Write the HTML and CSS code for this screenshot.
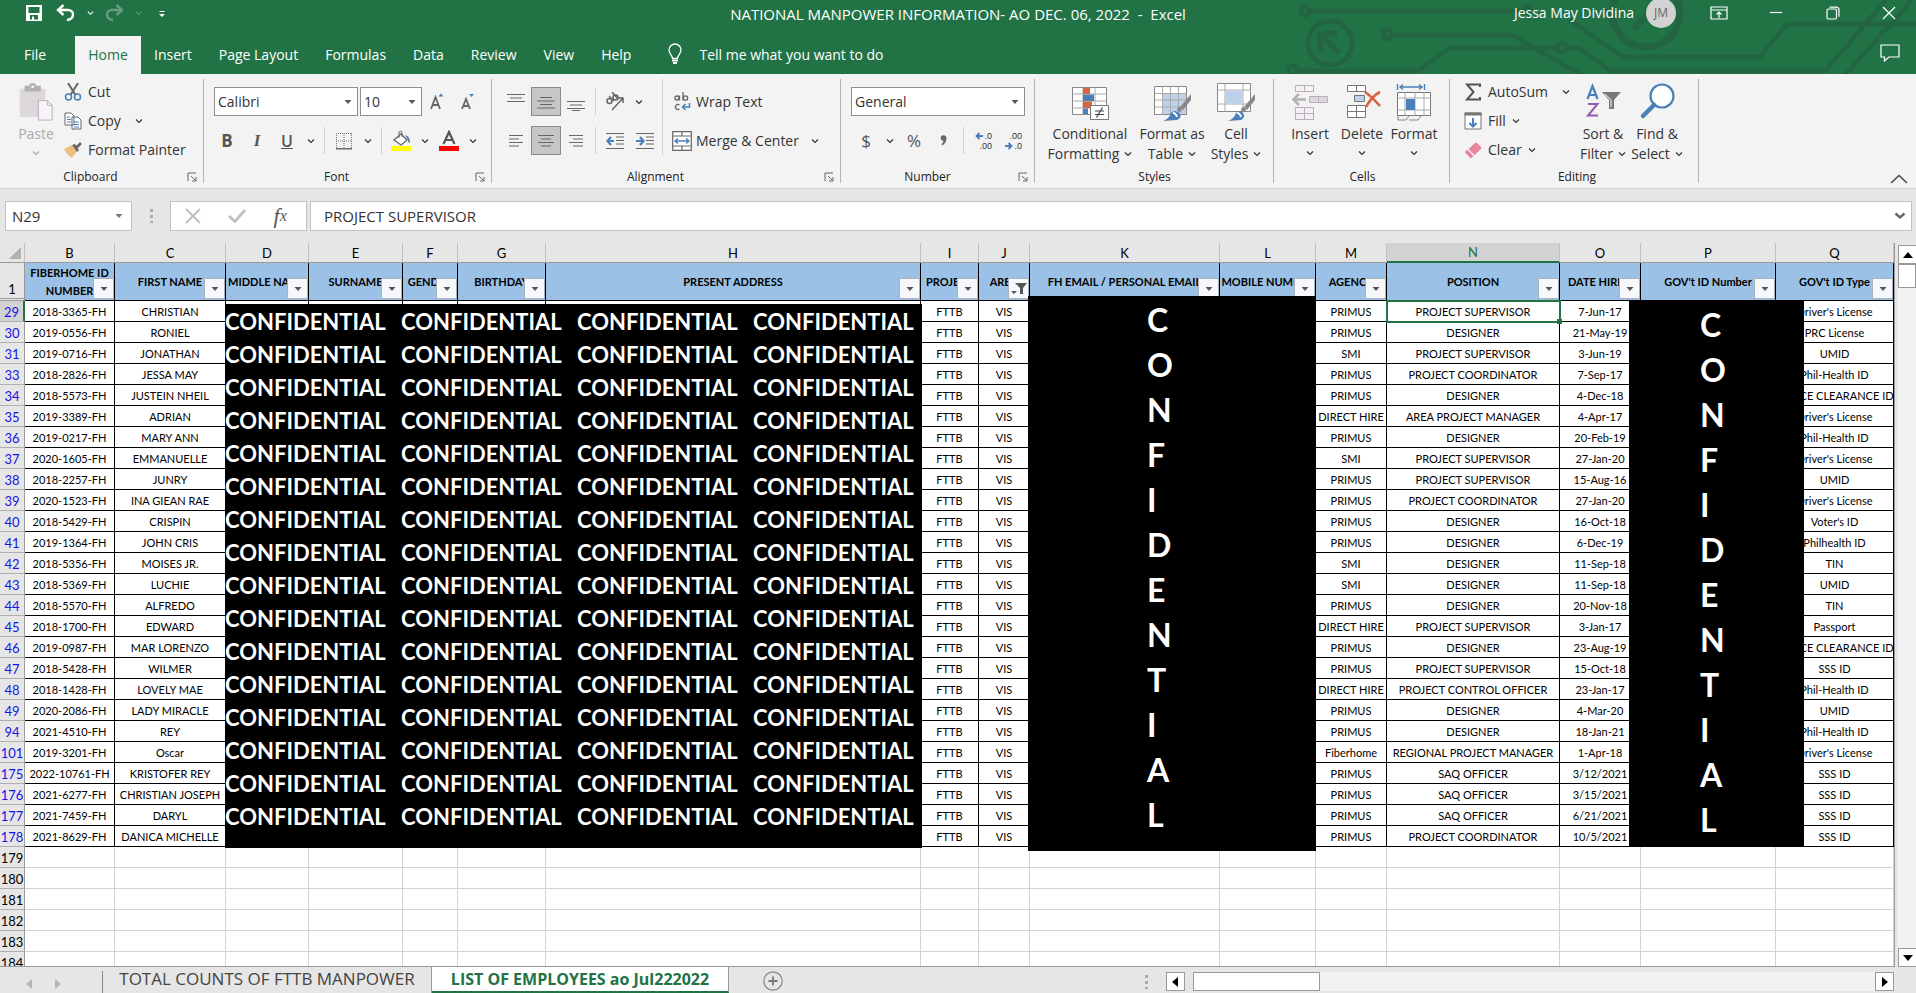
FILE: index.html
```html
<!DOCTYPE html>
<html lang="en">
<head>
<meta charset="utf-8">
<title>NATIONAL MANPOWER INFORMATION- AO DEC. 06, 2022 - Excel</title>
<link rel="stylesheet" href="styles.css">
</head>
<body>
<svg class="defs" aria-hidden="true">
  <symbol id="chev" viewBox="0 0 8 6"><path d="M1 1.5 4 4.5 7 1.5" fill="none" stroke="currentColor" stroke-width="1.2"/></symbol>
  <symbol id="tri" viewBox="0 0 8 6"><path d="M0.5 1h7L4 5z" fill="currentColor"/></symbol>
  <symbol id="launch" viewBox="0 0 10 10"><path d="M1 9V1h8M4 4l4.500 4.500M9 5v4H5" fill="none" stroke="#666" stroke-width="1"/></symbol>
</svg>
<div class="app">
  <header class="top">
    <svg class="art" width="646" height="74" viewBox="0 0 646 74" aria-hidden="true">
      <g fill="none" stroke="#236541" stroke-width="4.500">
        <circle cx="35" cy="11" r="4.500"/><path d="M40 11H253"/><circle cx="257" cy="9" r="3.500"/>
        <circle cx="60" cy="43" r="22" stroke-width="5"/><path d="M69 53 51 35M50 51V34h17" stroke-width="6"/>
        <circle cx="117" cy="34.500" r="4.500"/><path d="M122 35H240Q247 36 252 41L312 75"/>
        <circle cx="23" cy="70" r="4.500"/><path d="M28 71H148L180 48H287"/><circle cx="292" cy="47.500" r="4.500"/>
        <path d="M297 48H306Q312 49 316 53L340 71H555L616 0"/>
        <path d="M300 20 353 57H490L517 24H646"/>
        <path d="M575 75 642 0"/>
        <circle cx="376" cy="13" r="34" stroke-width="7"/><path d="M363 29 385 7" stroke-width="7"/>
      </g>
    </svg>
    <div class="titlebar">
      <div class="quick">
        <button class="qb" aria-label="Save"><svg width="18" height="18" viewBox="0 0 18 18"><path fill="#fff" fill-rule="evenodd" d="M1 1h16v16H1zM3.500 3v6h11V3zM5 11v4.500h2V12.500h2v3h4V11z"/></svg></button>
        <button class="qb" aria-label="Undo"><svg width="20" height="18" viewBox="0 0 20 18"><path d="M7.500 1 2 6l5.500 5M2.500 6H12c3 0 5 2 5 4.500S15 15.500 11 16" fill="none" stroke="#fff" stroke-width="2.400"/></svg></button>
        <button class="qc" aria-label="Undo list"><svg width="7" height="6"><use href="#chev"/></svg></button>
        <button class="qb dim" aria-label="Redo"><svg width="20" height="18" viewBox="0 0 20 18"><path d="M12.500 1 18 6l-5.500 5M17.500 6H8c-3 0-5 2-5 4.500S5 15.500 9 16" fill="none" stroke="#fff" stroke-width="2.400"/></svg></button>
        <button class="qc dim" aria-label="Redo list"><svg width="7" height="6"><use href="#chev"/></svg></button>
        <button class="qb" aria-label="Customize toolbar"><svg width="8" height="10" viewBox="0 0 8 10"><path d="M1.500 3.500h5" stroke="#fff"/><path d="M1 6h6L4 9z" fill="#fff"/></svg></button>
      </div>
      <div class="doc">NATIONAL MANPOWER INFORMATION- AO DEC. 06, 2022&nbsp; -&nbsp; Excel</div>
      <div class="account">
        <span class="user">Jessa May Dividina</span><span class="avatar">JM</span>
        <button class="wb" aria-label="Ribbon display"><svg width="18" height="14" viewBox="0 0 18 14"><path d="M1 1h16v12H1zM1 4h16M9 12V6.500M6.500 8.500 9 6l2.500 2.500" fill="none" stroke="#fff" stroke-width="1.200"/></svg></button>
        <button class="wb" aria-label="Minimize"><svg width="14" height="14" viewBox="0 0 14 14"><path d="M1 6.500h12" stroke="#fff" stroke-width="1.200"/></svg></button>
        <button class="wb" aria-label="Restore"><svg width="14" height="14" viewBox="0 0 14 14"><rect x="1" y="3" width="9.500" height="10" rx="1.500" fill="none" stroke="#fff" stroke-width="1.200"/><path d="M3.500 1.200H10q3 0 3 3v6.500" fill="none" stroke="#fff" stroke-width="1.200"/></svg></button>
        <button class="wb" aria-label="Close"><svg width="14" height="14" viewBox="0 0 14 14"><path d="m1 1 12 12M13 1 1 13" stroke="#fff" stroke-width="1.300"/></svg></button>
      </div>
    </div>
    <nav class="tabs">
      <button class="tab file">File</button><button class="tab on">Home</button><button class="tab">Insert</button><button class="tab">Page Layout</button><button class="tab">Formulas</button><button class="tab">Data</button><button class="tab">Review</button><button class="tab">View</button><button class="tab">Help</button>
      <button class="tab tell"><svg width="16" height="22" viewBox="0 0 16 22"><path d="M5.500 15.500C5.500 12 2 11 2 7a6 6 0 0 1 12 0c0 4-3.500 5-3.500 8.500z" fill="none" stroke="#fff" stroke-width="1.300"/><path d="M5 17.500h6M6 20h4" stroke="#fff" stroke-width="1.800"/></svg>Tell me what you want to do</button>
      <button class="comment" aria-label="Comments"><svg width="20" height="18" viewBox="0 0 20 18"><path d="M1 1h18v12H9l-4.500 4V13H1z" fill="none" stroke="#fff" stroke-width="1.200"/></svg></button>
    </nav>
  </header>

  <section class="ribbon">
    <div class="group g-clip">
      <div class="body">
        <button class="big w-paste off"><svg width="36" height="40" viewBox="0 0 36 40"><path d="M1 6h27v30H1z" fill="#dcd8dc"/><path d="M6 3h5q0-3 3.500-3T18 3h5v6H6z" fill="#b2b0b2"/><circle cx="14.500" cy="4" r="1.500" fill="#f3f3f3"/><path d="M20.500 18.500H30l5 5V39H20.500z" fill="#f8f3f8" stroke="#b2b0b2"/><path d="M30 18.500v5h5" fill="none" stroke="#b2b0b2"/></svg><span>Paste</span><svg width="8" height="6"><use href="#chev"/></svg></button>
        <div class="stack">
          <button class="line"><svg width="18" height="18" viewBox="0 0 18 18"><path d="m4 0 7.500 12M14 0 6.500 12" stroke="#666" stroke-width="2"/><circle cx="4.500" cy="14" r="3" fill="none" stroke="#4a7fb8" stroke-width="1.500"/><circle cx="13.500" cy="14" r="3" fill="none" stroke="#4a7fb8" stroke-width="1.500"/></svg>Cut</button>
          <button class="line"><svg width="18" height="18" viewBox="0 0 18 18"><path d="M1 1h6l3 3v9H1zM8 5h6l3 3v9H8z" fill="#fff" stroke="#666"/><path d="M3 5h3M3 7.500h4M3 10h4M10 10h5M10 12.500h5M10 15h5" stroke="#4a7fb8"/></svg>Copy<svg class="after" width="8" height="6"><use href="#chev"/></svg></button>
          <button class="line"><svg width="18" height="18" viewBox="0 0 18 18"><path d="M0 8 8 4l5 6-5 7Q3 14 0 8z" fill="#ecc07c"/><path d="m8 4 3-1 4 6-2 2zM12 5l4-4 2 2-4 4z" fill="#666"/></svg>Format Painter</button>
        </div>
      </div>
      <div class="foot"><span>Clipboard</span><button aria-label="Clipboard settings"><svg width="10" height="10"><use href="#launch"/></svg></button></div>
    </div>

    <div class="group g-font">
      <div class="rows">
        <div class="row inset">
          <label class="combo c144"><select aria-label="Font name"><option>Calibri</option></select><svg width="8" height="6"><use href="#tri"/></svg></label>
          <label class="combo c62"><select aria-label="Font size"><option>10</option></select><svg width="8" height="6"><use href="#tri"/></svg></label>
          <button class="b" aria-label="Increase font size"><svg width="18" height="20" viewBox="0 0 18 20"><path d="m2 17 4.500-12L11 17M3.500 13h6" fill="none" stroke="#666" stroke-width="1.800"/><path d="M9.500 4.500h5L12 1.500z" fill="#4a7fb8"/></svg></button>
          <button class="b" aria-label="Decrease font size"><svg width="18" height="20" viewBox="0 0 18 20"><path d="m3 17 4-10 4 10M4.500 14h5" fill="none" stroke="#666" stroke-width="1.800"/><path d="M10 2h5l-2.500 3z" fill="#4a7fb8"/></svg></button>
        </div>
        <div class="row">
          <button class="b t"><b>B</b></button><button class="b t"><i>I</i></button><button class="b t"><u>U</u></button><button class="cv" aria-label="Underline styles"><svg width="8" height="6"><use href="#chev"/></svg></button><span class="sep"></span>
          <button class="b" aria-label="Borders"><svg width="18" height="18" viewBox="0 0 18 18"><path d="M1.500 1v15M9 1v15M16.500 1v15M1 1.500h16M1 9h16" stroke="#777" stroke-dasharray="1 1"/><path d="M1 16.800h16" stroke="#555" stroke-width="1.300"/></svg></button><button class="cv" aria-label="Border styles"><svg width="8" height="6"><use href="#chev"/></svg></button><span class="sep"></span>
          <button class="b" aria-label="Fill color"><svg width="22" height="22" viewBox="0 0 22 22"><path d="m4 10 7-6 6 6-6 5z" fill="#fff" stroke="#666" stroke-width="1.300"/><path d="M9 8V3q0-2 1.500-2T12 3v4" fill="none" stroke="#666"/><path d="M15 5q5 1 5 8-2 0-2-3z" fill="#4a7fb8"/><path fill="#ff0" d="M1 16h20v5H1z"/></svg></button><button class="cv" aria-label="Fill colors"><svg width="8" height="6"><use href="#chev"/></svg></button>
          <button class="b" aria-label="Font color"><svg width="22" height="22" viewBox="0 0 22 22"><path d="M5.500 14 11 2l5.500 12M7.500 10h7" fill="none" stroke="#555" stroke-width="2.200"/><path fill="#f00" d="M1 16h20v5H1z"/></svg></button><button class="cv" aria-label="Font colors"><svg width="8" height="6"><use href="#chev"/></svg></button>
        </div>
      </div>
      <div class="foot"><span>Font</span><button aria-label="Font settings"><svg width="10" height="10"><use href="#launch"/></svg></button></div>
    </div>

    <div class="group g-align">
      <div class="body">
        <div class="rows w161">
          <div class="row">
            <button class="b" aria-label="Top align"><svg width="18" height="18" viewBox="0 0 18 18"><path d="M0 1.500h18M3 5h12M0 8.500h18" stroke="#666"/></svg></button>
            <button class="b sel" aria-label="Middle align"><svg width="18" height="18" viewBox="0 0 18 18"><path d="M3 4.500h12M0 8h18M3 11.500h12M0 15h18" stroke="#666"/></svg></button>
            <button class="b" aria-label="Bottom align"><svg width="18" height="18" viewBox="0 0 18 18"><path d="M0 8.500h18M3 12h12M0 15.500h18M5 17.500h8" stroke="#666"/></svg></button><span class="sep"></span>
            <button class="b" aria-label="Orientation"><svg width="20" height="20" viewBox="0 0 20 20"><g fill="none" stroke="#666" stroke-width="1.500"><circle cx="4.500" cy="9" r="2.500"/><path d="m4 4 5 5M7 0l6 7"/><circle cx="10.500" cy="5.500" r="2.500"/><path d="M7 18 18 6M18 11V6h-5"/></g></svg></button><button class="cv" aria-label="Orientation list"><svg width="8" height="6"><use href="#chev"/></svg></button>
          </div>
          <div class="row">
            <button class="b" aria-label="Align left"><svg width="14" height="14" viewBox="0 0 14 14"><path d="M0 1.500h14M0 5h10M0 8.500h14M0 12h10" stroke="#666"/></svg></button>
            <button class="b sel" aria-label="Center"><svg width="16" height="14" viewBox="0 0 16 14"><path d="M0 1.500h16M3 5h10M0 8.500h16M3 12h10" stroke="#666"/></svg></button>
            <button class="b" aria-label="Align right"><svg width="14" height="14" viewBox="0 0 14 14"><path d="M0 1.500h14M4 5h10M0 8.500h14M4 12h10" stroke="#666"/></svg></button><span class="sep"></span>
            <button class="b" aria-label="Decrease indent"><svg width="18" height="18" viewBox="0 0 18 18"><path d="M0 1.500h18M10 5h8M10 8.500h8M10 12h8M0 16.500h18" stroke="#666"/><path d="M8 9H2M5 5 1.500 9 5 13" fill="none" stroke="#4a7fb8" stroke-width="2.200"/></svg></button><button class="b" aria-label="Increase indent"><svg width="18" height="18" viewBox="0 0 18 18"><path d="M0 1.500h18M10 5h8M10 8.500h8M10 12h8M0 16.500h18" stroke="#666"/><path d="M0 9h6M4 5l3.500 4L4 13" fill="none" stroke="#4a7fb8" stroke-width="2.200"/></svg></button>
          </div>
        </div>
        <div class="rows wrapcol">
          <div class="row"><button class="line"><svg width="20" height="20" viewBox="0 0 20 20"><g fill="none" stroke="#666" stroke-width="1.300"><circle cx="5" cy="6" r="2"/><path d="M7.500 3.500v5M11 0v8.500"/><circle cx="13.500" cy="6" r="2.200"/><path d="M7.500 13a2.500 2.500 0 1 0 0 4"/></g><path d="M17.500 11v4H11M13.500 12 10.500 15l3 3" fill="none" stroke="#4a7fb8" stroke-width="1.500"/></svg>Wrap Text</button></div>
          <div class="row"><button class="line"><svg width="20" height="20" viewBox="0 0 20 20"><path d="M.7.7h18.600v18.600H.7zM.7 5h18.600M.7 15h18.600M10 1v4M10 15v4" fill="#fff" stroke="#666" stroke-width="1.200"/><path d="M3 10h14M6 7.500 3 10l3 2.500M14 7.500 17 10l-3 2.500" fill="none" stroke="#4a7fb8" stroke-width="1.400"/></svg>Merge &amp; Center<svg class="after" width="8" height="6"><use href="#chev"/></svg></button></div>
        </div>
      </div>
      <div class="foot"><span>Alignment</span><button aria-label="Alignment settings"><svg width="10" height="10"><use href="#launch"/></svg></button></div>
    </div>

    <div class="group g-num">
      <div class="rows">
        <div class="row"><label class="combo c174"><select aria-label="Number format"><option>General</option></select><svg width="8" height="6"><use href="#tri"/></svg></label></div>
        <div class="row">
          <button class="b t">$</button><button class="cv" aria-label="Currency list"><svg width="8" height="6"><use href="#chev"/></svg></button><button class="b t">%</button><button class="b" aria-label="Comma style"><svg width="8" height="14" viewBox="0 0 8 14"><circle cx="3.500" cy="4" r="2.800" fill="#666"/><path d="M6.300 4q.5 5-4 7.500l-.8-1Q4 8 3.500 5z" fill="#666"/></svg></button><span class="sep"></span>
          <button class="b dec" aria-label="Increase decimal"><span><svg width="8" height="8" viewBox="0 0 8 8"><path d="M8 4H2M4.500 1 1.500 4l3 3" fill="none" stroke="#4a7fb8" stroke-width="1.800"/></svg>.0</span><span>.00</span></button><button class="b dec" aria-label="Decrease decimal"><span>.00</span><span><svg width="8" height="8" viewBox="0 0 8 8"><path d="M0 4h6M3.500 1l3 3-3 3" fill="none" stroke="#4a7fb8" stroke-width="1.800"/></svg>.0</span></button>
        </div>
      </div>
      <div class="foot"><span>Number</span><button aria-label="Number settings"><svg width="10" height="10"><use href="#launch"/></svg></button></div>
    </div>

    <div class="group g-sty">
      <div class="body">
        <button class="big w92"><svg width="38" height="38" viewBox="0 0 38 38"><path d="M1.500 4.500h34v27h-34z" fill="#fff" stroke="#888"/><path d="M1.500 11h34M1.500 18h34M1.500 25h34M12 4.500v27M24 4.500v27" stroke="#aaa"/><path fill="#d9623f" d="M12 5h7v6h-7zM12 18.500h9V25h-9z"/><path fill="#4a7fb8" d="M12 11.500h11V18H12zM12 25.500h5V31h-5z"/><path d="M19.500 22.500h18v14h-18z" fill="#fff" stroke="#777"/><path d="M24 28h9M24 31.500h9M31.500 24.500l-6 10" stroke="#444" stroke-width="1.200"/></svg><span>Conditional</span><span>Formatting <svg width="8" height="6"><use href="#chev"/></svg></span></button>
        <button class="big w72"><svg width="38" height="38" viewBox="0 0 38 38"><path d="M1.500 3.500h32v28h-32z" fill="#fff" stroke="#888"/><path fill="#bdd2ea" d="M10 11h23v20H10z"/><path d="M1.500 10.500h32M1.500 17h32M1.500 24h32M9.500 3.500v28M17.500 3.500v28M25.500 3.500v28" stroke="#aaa"/><path d="m38 11-11 13 3 3 8-10z" fill="#888"/><path d="m25 25 3 3" stroke="#888" stroke-width="4"/><path d="M10 38q6-2 8-8 4-4 8 0t-2 7z" fill="#4a7fb8"/><path d="M20 30q3 0 4 4" stroke="#fff" stroke-width="2" fill="none"/></svg><span>Format as</span><span>Table <svg width="8" height="6"><use href="#chev"/></svg></span></button>
        <button class="big w56"><svg width="38" height="38" viewBox="0 0 38 38"><path d="M.5.500h33v28H.5z" fill="#fff" stroke="#888"/><path d="M.5 7h33M.5 21h33M8 .5v28M26 .5v28" stroke="#aaa"/><path fill="#bdd2ea" d="M8.500 7.500h17v13h-17z"/><path d="m38 11-11 13 3 3 8-10z" fill="#888"/><path d="m25 25 3 3" stroke="#888" stroke-width="4"/><path d="M11 38q6-2 8-8 4-4 7 0t-2 7z" fill="#4a7fb8"/><path d="M20 30q3 0 4 4" stroke="#fff" stroke-width="2" fill="none"/></svg><span>Cell</span><span>Styles <svg width="8" height="6"><use href="#chev"/></svg></span></button>
      </div>
      <div class="foot"><span>Styles</span></div>
    </div>

    <div class="group g-cell">
      <div class="body">
        <button class="big w52"><svg width="38" height="38" viewBox="0 0 38 38"><path d="M4.500 2.500h18v6h-18zM13.500 2.500v6M4.500 24.500h18v12h-18zM13.500 24.500v12M4.500 30.500h18" fill="#f6f0f6" stroke="#b5b0b5"/><path d="M18.500 13.500h18v6h-18zM27.500 13.500v6" fill="#ddd8dd" stroke="#b5b0b5"/><path d="M15 16.500H3M8 11l-5.500 5.500L8 22" fill="none" stroke="#b5b0b5" stroke-width="2.600"/></svg><span>Insert</span><svg width="8" height="6"><use href="#chev"/></svg></button>
        <button class="big w52"><svg width="38" height="38" viewBox="0 0 38 38"><path d="M4.500 2.500h18v6h-18zM13.500 2.500v6M4.500 22.500h18v12h-18zM13.500 22.500v12M4.500 28.500h18" fill="#fff" stroke="#777"/><path d="M11.500 12.500h10v6h-10z" fill="#bdd2ea" stroke="#777"/><path d="M22 9q6 4 15 14M37 9q-8 4-14 15" fill="none" stroke="#d9623f" stroke-width="2.600"/></svg><span>Delete</span><svg width="8" height="6"><use href="#chev"/></svg></button>
        <button class="big w52"><svg width="38" height="38" viewBox="0 0 38 38"><path d="M2.500 1v6M29.500 1v6M5 4h22M8 1.500 5 4l3 2.500M24 1.500 27 4l-3 2.500" fill="none" stroke="#4a7fb8" stroke-width="1.400"/><path d="M2.500 9.500h33v23h-33z" fill="#fff" stroke="#777"/><path d="M2.500 15h33M2.500 27h33M10 9.500v23M20 9.500v23M29 9.500v23" stroke="#aaa"/><path fill="#4a7fb8" d="M11 16h9v11h-9z"/><path d="M3 33v4h8l3-4M14 37h9l3-4" fill="none" stroke="#888"/></svg><span>Format</span><svg width="8" height="6"><use href="#chev"/></svg></button>
      </div>
      <div class="foot"><span>Cells</span></div>
    </div>

    <div class="group g-edit">
      <div class="body">
        <div class="stack w111">
          <button class="line"><svg width="18" height="18" viewBox="0 0 18 18"><path d="M16 4V1.500H3L9.500 9 3 16.500h13V14" fill="none" stroke="#555" stroke-width="2"/></svg>AutoSum<svg class="after" width="8" height="6"><use href="#chev"/></svg></button>
          <button class="line"><svg width="18" height="18" viewBox="0 0 18 18"><path d="M1 1h16v16H1z" fill="#fff" stroke="#777"/><path d="M.5.500h17v3H.5z" fill="#777"/><path d="M9 6v8M5.500 11 9 14.500l3.500-3.500" fill="none" stroke="#4a7fb8" stroke-width="2"/></svg>Fill <svg width="8" height="6"><use href="#chev"/></svg></button>
          <button class="line"><svg width="18" height="18" viewBox="0 0 18 18"><path d="M11 2q1-1 2 0l4 4q1 1 0 2l-6.500 6-6-6z" fill="#e8859a"/><path d="m3.500 9 6 6-1.500 1.500q-1 1-2 0L1.500 12q-1-1 0-2z" fill="#e8859a"/></svg>Clear <svg width="8" height="6"><use href="#chev"/></svg></button>
        </div>
        <button class="big w56"><svg width="38" height="38" viewBox="0 0 38 38"><path d="m3.500 16 5-13 5 13M5 12h7.500" fill="none" stroke="#4a7fb8" stroke-width="2.200"/><path d="M4 21h9.500L4 32.500h10" fill="none" stroke="#8e5bb5" stroke-width="2"/><path d="M18 9h19l-7 8v9h-5v-9z" fill="#777"/><path d="m21 11 6 6v7" stroke="#fff" fill="none"/></svg><span>Sort &amp;</span><span>Filter <svg width="8" height="6"><use href="#chev"/></svg></span></button>
        <button class="big w52"><svg width="38" height="38" viewBox="0 0 38 38"><circle cx="24" cy="13" r="11.500" fill="#fff" stroke="#4a7fb8" stroke-width="2.200"/><path d="M16 22 5 33" stroke="#4a7fb8" stroke-width="4.500" stroke-linecap="round"/></svg><span>Find &amp;</span><span>Select <svg width="8" height="6"><use href="#chev"/></svg></span></button>
      </div>
      <div class="foot"><span>Editing</span></div>
    </div>
    <button class="collapse" aria-label="Collapse ribbon"><svg width="18" height="10" viewBox="0 0 18 10"><path d="m1 9 8-7.500L17 9" fill="none" stroke="#444" stroke-width="1.400"/></svg></button>
  </section>

  <section class="fbar">
    <label class="namebox"><input aria-label="Name box" value="N29"><svg width="8" height="6"><use href="#tri"/></svg></label>
    <span class="dots"></span>
    <div class="fx">
      <button aria-label="Cancel"><svg width="16" height="16" viewBox="0 0 16 16"><path d="m1 1 14 14M15 1 1 15" stroke="#c0c0c0" stroke-width="2"/></svg></button>
      <button aria-label="Enter"><svg width="18" height="14" viewBox="0 0 18 14"><path d="m1 7 6 5.500L17 1" fill="none" stroke="#c0c0c0" stroke-width="2.800"/></svg></button>
      <button class="fn"><i>f</i><small>x</small></button>
    </div>
    <label class="formula"><input aria-label="Formula" value="PROJECT SUPERVISOR"><svg width="12" height="8" viewBox="0 0 12 8"><path d="m1.500 1.500 4.500 4 4.500-4" fill="none" stroke="#666" stroke-width="2.400"/></svg></label>
  </section>

  <main class="work">
    <div class="sheet">
      <table class="grid" id="grid"></table>
      <div class="cover cover-a" id="coverA"></div>
      <div class="cover cover-b" id="coverB"></div>
      <div class="cover cover-c" id="coverC"></div>
    </div>
    <div class="vscroll">
      <button class="arrow" aria-label="Scroll up"><svg width="10" height="6" viewBox="0 0 10 6"><path d="M0 6h10L5 0z"/></svg></button>
      <div class="vthumb"></div><div class="space"></div>
      <button class="arrow" aria-label="Scroll down"><svg width="10" height="6" viewBox="0 0 10 6"><path d="M0 0h10L5 6z"/></svg></button>
    </div>
  </main>

  <footer class="sheets">
    <div class="nav"><button aria-label="Previous sheet"><svg width="6" height="10" viewBox="0 0 6 10"><path d="M6 0v10L0 5z" fill="#b8b8b8"/></svg></button><button aria-label="Next sheet"><svg width="6" height="10" viewBox="0 0 6 10"><path d="M0 0v10l6-5z" fill="#b8b8b8"/></svg></button></div>
    <button class="st">TOTAL COUNTS OF FTTB MANPOWER</button>
    <button class="st cur">LIST OF EMPLOYEES ao Jul222022</button>
    <button class="add" aria-label="New sheet"><svg width="20" height="20" viewBox="0 0 20 20"><circle cx="10" cy="10" r="9.200" fill="none" stroke="#888" stroke-width="1.200"/><path d="M10 5.500v9M5.500 10h9" stroke="#777" stroke-width="1.800"/></svg></button>
    <span class="dots"></span>
    <div class="hscroll">
      <button class="arrow" aria-label="Scroll left"><svg width="6" height="10" viewBox="0 0 6 10"><path d="M6 0v10L0 5z"/></svg></button>
      <div class="hthumb"></div><div class="space"></div>
      <button class="arrow" aria-label="Scroll right"><svg width="6" height="10" viewBox="0 0 6 10"><path d="M0 0v10l6-5z"/></svg></button>
    </div>
  </footer>
</div>
<script src="app.js"></script>
</body>
</html>
```
FILE: styles.css
```css
* { box-sizing: border-box; }
body { margin: 0; font-family: "Open Sans", "Noto Sans", sans-serif; font-size: 14px; color: #333; }
button, input, select { font: inherit; color: inherit; border: 0; background: none; padding: 0; margin: 0; border-radius: 0; }
input, select { outline: 0; appearance: none; }
svg { flex: none; }
.defs { display: none; }
.app { display: flex; flex-direction: column; height: 100vh; min-width: 1700px; overflow: hidden; background: #e6e6e6; }

.top { position: relative; background: #217346; color: #fff; }
.art { position: absolute; right: 0; top: 0; }
.titlebar { position: relative; height: 36px; display: grid; grid-template-columns: 1fr auto 1fr; align-items: start; }
.quick { display: flex; height: 26px; align-items: center; padding-left: 18px; }
.qb { width: 32px; display: flex; justify-content: center; }
.qc { width: 16px; display: flex; justify-content: center; }
.dim { opacity: .3; }
.doc { line-height: 29px; font-size: 15px; }
.account { display: flex; justify-content: flex-end; align-items: center; height: 26px; line-height: 26px; }
.user { margin-right: 12px; }
.avatar { width: 30px; height: 30px; border-radius: 50%; background: #d2d2d2; color: #666; text-align: center; line-height: 30px; font-size: 12px; margin-right: 14px; }
.wb { width: 57px; height: 26px; display: flex; align-items: center; justify-content: center; }
.wb:last-child { width: 55px; }
.tabs { position: relative; height: 38px; display: flex; }
.tab { padding: 0 14px 2px 13px; }
.file { width: 75px; padding-right: 18px; }
.on { background: #f3f3f3; color: #217346; width: 66px; padding: 0 0 2px; }
.tell { display: flex; align-items: center; gap: 16px; padding-left: 22px; }
.comment { margin-left: auto; width: 52px; }

.ribbon { display: flex; height: 115px; background: #f3f3f3; border-bottom: 1px solid #d0d0d0; padding-top: 5px; }
.group { position: relative; flex: none; height: 104px; border-right: 1px solid #b5b5b5; display: flex; flex-direction: column; justify-content: space-between; }
.g-clip { width: 204px; padding-left: 8px; }
.g-font { width: 288px; padding-left: 8px; }
.g-align { width: 349px; padding-left: 9px; }
.g-num { width: 194px; padding-left: 10px; }
.g-sty { width: 239px; padding-left: 9px; }
.g-cell { width: 176px; padding-left: 10px; }
.g-edit { width: 249px; padding-left: 14px; }
.body { display: flex; }
.foot { display: flex; height: 12px; margin-left: -8px; align-items: center; font-size: 12px; line-height: 12px; color: #222; }
.foot span { flex: 1; text-align: center; }
.foot button { width: 22px; display: flex; justify-content: center; }
.big { display: flex; flex-direction: column; align-items: center; height: 84px; line-height: 20px; padding-top: 4px; }
.big > svg:first-child { margin-bottom: 3px; height: 38px; }
.big > svg:last-child { margin-top: 6px; }
.big span { display: flex; align-items: center; gap: 5px; white-space: nowrap; }
.off { color: #aaa; }
.w-paste { width: 56px; }
.w92 { width: 92px; }
.w72 { width: 72px; }
.w56 { width: 56px; }
.w52 { width: 52px; }
.w111 { width: 111px; }
.w161 { width: 161px; }
.stack { display: flex; flex-direction: column; }
.line { display: flex; align-items: center; gap: 6px; height: 27px; white-space: nowrap; }
.stack .line { height: 29px; padding-bottom: 4px; }
.wrapcol .line { gap: 4px; }
.after { margin-left: 8px; }
.rows { display: flex; flex-direction: column; gap: 10px; padding-top: 8px; }
.row { display: flex; align-items: center; height: 29px; }
.inset { padding-left: 2px; gap: 2px; }
.b { width: 28px; height: 29px; display: flex; align-items: center; justify-content: center; }
.row:not(.inset) .b { width: 30px; }
.b.sel { background: #c6c6c6; border: 1px solid #8a8a8a; }
.t { font-size: 17px; color: #555; }
.t i { font-family: "Liberation Serif", serif; font-weight: bold; }
.t u { font-size: 16px; font-weight: 600; }
.cv { width: 18px; display: flex; justify-content: center; }
.sep { width: 9px; height: 27px; display: flex; justify-content: center; }
.sep::before { content: ""; width: 1px; background: #cfcfcf; }
.dec { flex-direction: column; font-family: "Liberation Sans", sans-serif; font-size: 9px; line-height: 10px; color: #333; align-items: flex-end; padding-right: 6px; }
.dec span { display: flex; align-items: center; gap: 1px; }
.combo, .namebox, .formula { position: relative; display: flex; align-items: center; background: #fff; border: 1px solid #8f8f8f; height: 29px; }
.combo select { width: 100%; height: 27px; padding-left: 3px; }
.combo svg { position: absolute; right: 5px; color: #555; }
.c144 { width: 144px; }
.c62 { width: 62px; }
.c174 { width: 174px; }
.wrapcol { border-left: 1px solid #cfcfcf; padding-left: 9px; }
.collapse { margin-left: auto; align-self: flex-end; width: 34px; height: 20px; }

.fbar { display: flex; align-items: center; height: 54px; padding: 0 4px 0 5px; }
.namebox, .formula, .fx { border: 1px solid #c3c3c3; background: #fff; height: 30px; font-size: 15px; }
.namebox { width: 127px; }
.namebox input { width: 90px; padding-left: 6px; }
.namebox svg { position: absolute; right: 8px; color: #777; }
.dots { width: 38px; height: 14px; display: flex; justify-content: center; }
.dots::before { content: ""; width: 3px; background: repeating-linear-gradient(#aaa 0 3px, transparent 3px 6px); }
.fx { display: flex; width: 137px; margin-right: 3px; padding-right: 4px; }
.fx button { flex: 1; display: flex; align-items: center; justify-content: center; }
.fx .fn { font-family: "Liberation Serif", serif; font-size: 22px; color: #555; }
.fn small { font-style: italic; font-size: 16px; }
.formula { flex: 1; padding: 0 5px 0 13px; }
.formula input { flex: 1; }

.work { flex: 1; min-height: 0; display: flex; }
.sheet { position: relative; flex: 1; overflow: hidden; border-bottom: 1px solid #999; }
.grid { width: 100%; table-layout: fixed; border-collapse: separate; border-spacing: 0; background: #fff; font-family: Lato, sans-serif; color: #000; }
.grid th, .grid td { padding: 0; height: 21px; overflow: hidden; white-space: nowrap; text-align: center; font-size: 11px; font-weight: 400; line-height: 18px; border-right: 1px solid #d4d4d4; border-bottom: 1px solid #d4d4d4; }
.grid td { padding-top: 2px; }
.grid .letters th { height: 20px; padding-top: 1px; background: #e6e6e6; font-size: 13px; border-color: #c0c0c0; border-bottom-color: #999; }
.grid .letters th.hot { background: #d2d2d2; color: #217346; border-bottom: 2px solid #217346; line-height: 17px; }
.grid th.num { padding-top: 2px; background: #e6e6e6; font-size: 13px; vertical-align: bottom; border-right-color: #999; border-bottom-color: #b0b0b0; }
.grid .blue { color: #1414e6; }
.grid th.hotrow { background: #d2d2d2; border-right: 2px solid #217346; }
.corner svg { display: block; margin-left: auto; margin-right: 3px; }
.grid .heads th { height: 38px; border-color: #000; }
.grid .heads th.num { border-color: #999; border-bottom: 3px double #999; }
.grid .heads .h { position: relative; background: #9bc2e6; font-weight: 700; }
.filter { position: absolute; right: 0; bottom: 1px; width: 21px; height: 21px; background: #f6f8fb; border: 1px solid #aab2bd; display: flex; align-items: center; justify-content: center; color: #555; }
.grid .data td { border-color: #000; }
.grid .data td.active { outline: 2px solid #217346; outline-offset: -1px; overflow: visible; position: relative; }
.handle { position: absolute; right: -3px; bottom: -3px; width: 5px; height: 5px; background: #217346; }
.spill { display: flex; justify-content: center; }

.cover { position: absolute; background: #000; color: #fff; font-family: Lato, sans-serif; font-weight: 700; white-space: pre; }
.cover-a { left: 225px; top: 61px; width: 697px; height: 544px; font-size: 22px; line-height: 33px; padding-top: 1px; }
.cover-a div { display: grid; grid-template-columns: repeat(4, 176px); }
.cover-b { left: 1028px; top: 53px; width: 288px; height: 555px; font-size: 32px; line-height: 45px; padding: 1px 0 0 119px; }
.cover-c { left: 1629px; top: 58px; width: 175px; height: 546px; font-size: 32px; line-height: 45px; padding: 1px 0 0 71px; }

.vscroll { width: 22px; padding: 2px 0 0 3px; display: flex; flex-direction: column; border-left: 1px solid #999; }
.space { flex: 1; background: #f2f2f2; }
.arrow { flex: none; width: 19px; height: 19px; background: #fff; border: 1px solid #999; display: flex; align-items: center; justify-content: center; }
.vthumb { height: 24px; background: #fff; border: 1px solid #999; }

.sheets { height: 26px; display: flex; align-items: stretch; }
.nav { width: 103px; display: flex; align-items: center; padding: 2px 0 0 14px; border-right: 1px solid #888; margin: 4px 0 0; }
.nav button { width: 29px; }
.st { width: 329px; font-size: 17px; line-height: 20px; padding-bottom: 3px; color: #444; border-right: 1px solid #999; white-space: nowrap; }
.cur { width: 297px; background: #fff; color: #217346; font-size: 16px; font-weight: 700; border-bottom: 2px solid #217346; padding-bottom: 1px; }
.add { width: 88px; display: flex; align-items: center; justify-content: center; padding-top: 2px; }
.sheets .dots { margin: 8px 0 0 auto; }
.hscroll { width: 38%; display: flex; margin: 5px 22px 2px 0; }
.hthumb { width: 127px; margin-left: 8px; background: #fff; border: 1px solid #999; }
```
FILE: app.js
```js
const columns = [
  ["B", 90, "FIBERHOME ID<br>NUMBER"], ["C", 111, "FIRST NAME"], ["D", 83, "MIDDLE NAME"], ["E", 94, "SURNAME"],
  ["F", 55, "GENDER"], ["G", 88, "BIRTHDAY"], ["H", 375, "PRESENT ADDRESS"], ["I", 58, "PROJECT"], ["J", 51, "AREA"],
  ["K", 190, "FH EMAIL / PERSONAL EMAIL"], ["L", 96, "MOBILE NUMBER"], ["M", 71, "AGENCY"], ["N", 173, "POSITION"],
  ["O", 81, "DATE HIRED"], ["P", 135, "GOV't ID Number"], ["Q", 0, "GOV't ID Type"]
];
const people = `29|2018-3365-FH|CHRISTIAN|PRIMUS|PROJECT SUPERVISOR|7-Jun-17|Driver's License
30|2019-0556-FH|RONIEL|PRIMUS|DESIGNER|21-May-19|PRC License
31|2019-0716-FH|JONATHAN|SMI|PROJECT SUPERVISOR|3-Jun-19|UMID
33|2018-2826-FH|JESSA MAY|PRIMUS|PROJECT COORDINATOR|7-Sep-17|Phil-Health ID
34|2018-5573-FH|JUSTEIN NHEIL|PRIMUS|DESIGNER|4-Dec-18|POLICE CLEARANCE ID
35|2019-3389-FH|ADRIAN|DIRECT HIRE|AREA PROJECT MANAGER|4-Apr-17|Driver's License
36|2019-0217-FH|MARY ANN|PRIMUS|DESIGNER|20-Feb-19|Phil-Health ID
37|2020-1605-FH|EMMANUELLE|SMI|PROJECT SUPERVISOR|27-Jan-20|Driver's License
38|2018-2257-FH|JUNRY|PRIMUS|PROJECT SUPERVISOR|15-Aug-16|UMID
39|2020-1523-FH|INA GIEAN RAE|PRIMUS|PROJECT COORDINATOR|27-Jan-20|Driver's License
40|2018-5429-FH|CRISPIN|PRIMUS|DESIGNER|16-Oct-18|Voter's ID
41|2019-1364-FH|JOHN CRIS|PRIMUS|DESIGNER|6-Dec-19|Philhealth ID
42|2018-5356-FH|MOISES JR.|SMI|DESIGNER|11-Sep-18|TIN
43|2018-5369-FH|LUCHIE|SMI|DESIGNER|11-Sep-18|UMID
44|2018-5570-FH|ALFREDO|PRIMUS|DESIGNER|20-Nov-18|TIN
45|2018-1700-FH|EDWARD|DIRECT HIRE|PROJECT SUPERVISOR|3-Jan-17|Passport
46|2019-0987-FH|MAR LORENZO|PRIMUS|DESIGNER|23-Aug-19|POLICE CLEARANCE ID
47|2018-5428-FH|WILMER|PRIMUS|PROJECT SUPERVISOR|15-Oct-18|SSS ID
48|2018-1428-FH|LOVELY MAE|DIRECT HIRE|PROJECT CONTROL OFFICER|23-Jan-17|Phil-Health ID
49|2020-2086-FH|LADY MIRACLE|PRIMUS|DESIGNER|4-Mar-20|UMID
94|2021-4510-FH|REY|PRIMUS|DESIGNER|18-Jan-21|Phil-Health ID
101|2019-3201-FH|Oscar|Fiberhome|REGIONAL PROJECT MANAGER|1-Apr-18|Driver's License
175|2022-10761-FH|KRISTOFER REY|PRIMUS|SAQ OFFICER|3/12/2021|SSS ID
176|2021-6277-FH|CHRISTIAN JOSEPH|PRIMUS|SAQ OFFICER|3/15/2021|SSS ID
177|2021-7459-FH|DARYL|PRIMUS|SAQ OFFICER|6/21/2021|SSS ID
178|2021-8629-FH|DANICA MICHELLE|PRIMUS|PROJECT COORDINATOR|10/5/2021|SSS ID`.split("\n").map(r => r.split("|"));

const arrow = '<svg width="8" height="6"><use href="#tri"/></svg>';
const funnel = '<svg width="16" height="14" viewBox="0 0 16 14"><path d="M4 1h12l-4 5v6H9V6zM0 9h6l-3 3z" fill="#555"/></svg>';

let html = '<colgroup><col style="width:25px">' +
  columns.map(c => c[1] ? `<col style="width:${c[1]}px">` : "<col>").join("") + "</colgroup><thead>";
html += '<tr class="letters"><th class="corner"><svg width="12" height="12" viewBox="0 0 12 12"><path d="M12 0v12H0z" fill="#b2b2b2"/></svg></th>' +
  columns.map(c => `<th${c[0] === "N" ? ' class="hot"' : ""}>${c[0]}</th>`).join("") + "</tr>";
html += '<tr class="heads"><th class="num">1</th>' +
  columns.map(c => `<th class="h">${c[2]}<button class="filter" aria-label="Filter ${c[0]}">${c[0] === "J" ? funnel : arrow}</button></th>`).join("") + "</tr></thead><tbody>";
for (const [n, id, first, agency, position, hired, type] of people) {
  const active = n === "29";
  html += `<tr class="data"><th class="num blue${active ? " hotrow" : ""}">${n}</th><td>${id}</td><td>${first}</td>` +
    "<td></td>".repeat(5) + "<td>FTTB</td><td>VIS</td><td></td><td></td>" +
    `<td>${agency}</td><td${active ? ' class="active"' : ""}>${position}${active ? '<span class="handle"></span>' : ""}</td><td>${hired}</td><td></td><td><div class="spill">${type}</div></td></tr>`;
}
for (let n = 179; n <= 184; n++) {
  html += `<tr><th class="num">${n}</th>${"<td></td>".repeat(16)}</tr>`;
}
document.getElementById("grid").innerHTML = html + "</tbody>";

const word = "CONFIDENTIAL";
document.getElementById("coverA").innerHTML = `<div>${`<span>${word}</span>`.repeat(4)}</div>`.repeat(16);
const down = [...word].map(ch => `<div>${ch}</div>`).join("");
document.getElementById("coverB").innerHTML = down;
document.getElementById("coverC").innerHTML = down;
```
